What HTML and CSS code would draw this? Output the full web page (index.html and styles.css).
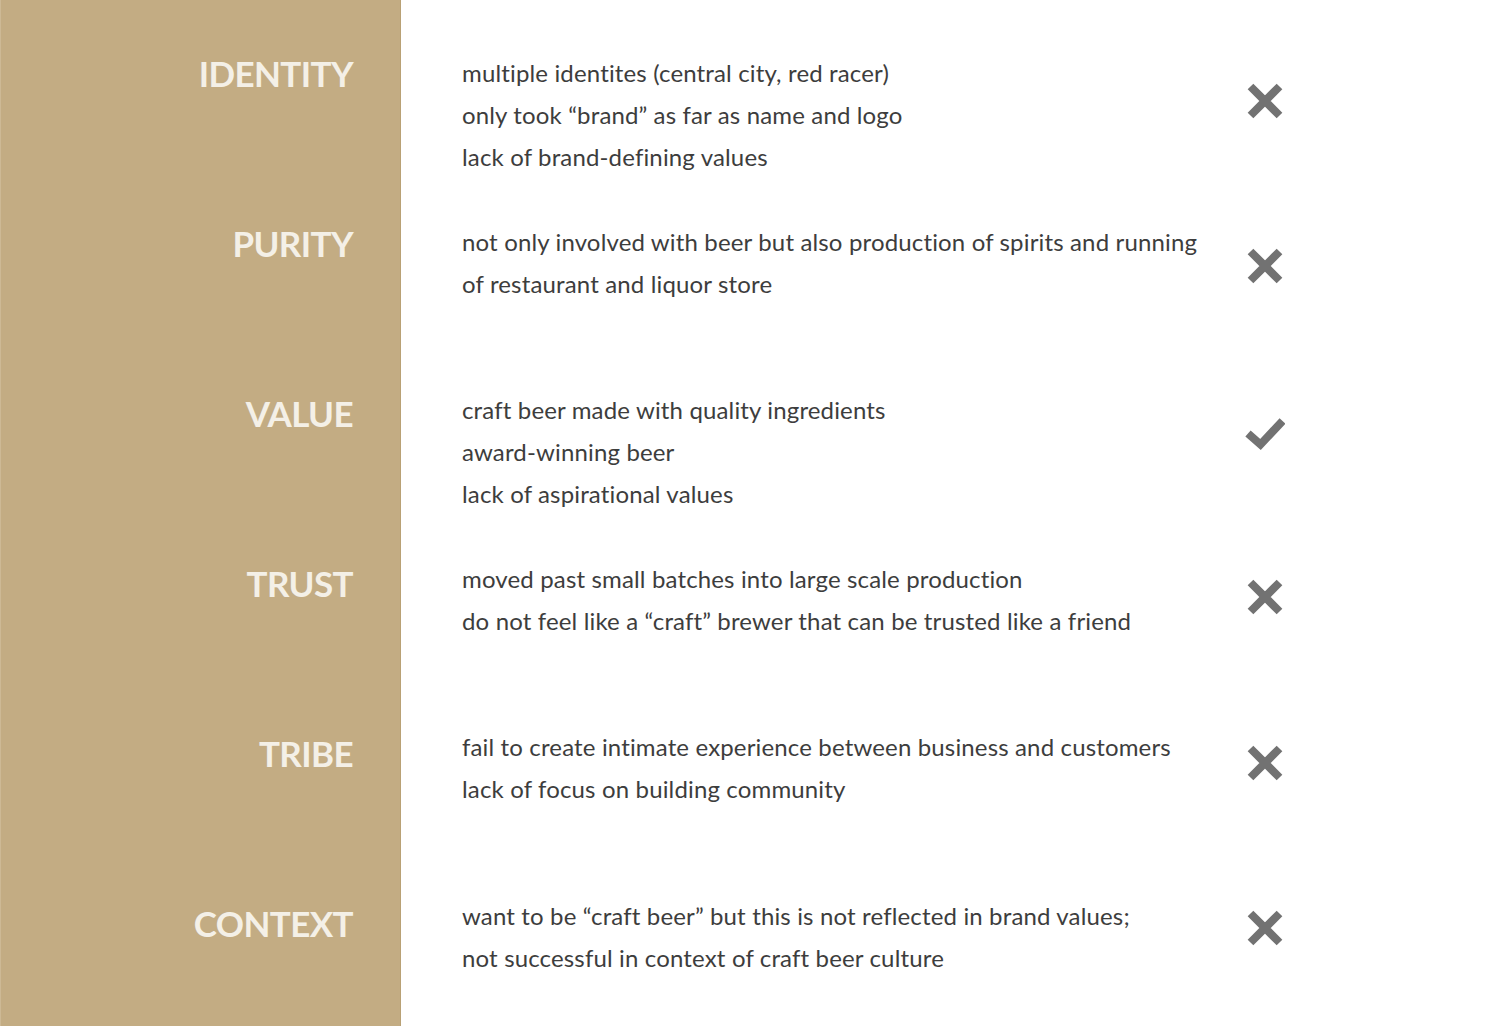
FILE: index.html
```html
<!DOCTYPE html>
<html>
<head>
<meta charset="utf-8">
<link rel="stylesheet" href="styles.css">
</head>
<body>
<div class="page">
  <aside class="sidebar">
    <div class="label">IDENTITY</div>
    <div class="label">PURITY</div>
    <div class="label">VALUE</div>
    <div class="label">TRUST</div>
    <div class="label">TRIBE</div>
    <div class="label">CONTEXT</div>
  </aside>
  <main class="main">
    <div class="notes">
      <div class="note">
        <p>multiple identites (central city, red racer)</p>
        <p>only took “brand” as far as name and logo</p>
        <p>lack of brand-defining values</p>
      </div>
      <div class="note">
        <p>not only involved with beer but also production of spirits and running</p>
        <p>of restaurant and liquor store</p>
      </div>
      <div class="note">
        <p>craft beer made with quality ingredients</p>
        <p>award-winning beer</p>
        <p>lack of aspirational values</p>
      </div>
      <div class="note">
        <p>moved past small batches into large scale production</p>
        <p>do not feel like a “craft” brewer that can be trusted like a friend</p>
      </div>
      <div class="note">
        <p>fail to create intimate experience between business and customers</p>
        <p>lack of focus on building community</p>
      </div>
      <div class="note">
        <p>want to be “craft beer” but this is not reflected in brand values;</p>
        <p>not successful in context of craft beer culture</p>
      </div>
    </div>
    <div class="marks">
      <div class="mark"><svg class="icon" viewBox="0 0 40 40"><path d="M5.5 5.5 L34.5 34.5 M34.5 5.5 L5.5 34.5" /></svg></div>
      <div class="mark"><svg class="icon" viewBox="0 0 40 40"><path d="M5.5 5.5 L34.5 34.5 M34.5 5.5 L5.5 34.5" /></svg></div>
      <div class="mark"><svg class="icon" viewBox="0 0 40 40"><path d="M3 21.5 L15.5 32.5 L37.5 9" /></svg></div>
      <div class="mark"><svg class="icon" viewBox="0 0 40 40"><path d="M5.5 5.5 L34.5 34.5 M34.5 5.5 L5.5 34.5" /></svg></div>
      <div class="mark"><svg class="icon" viewBox="0 0 40 40"><path d="M5.5 5.5 L34.5 34.5 M34.5 5.5 L5.5 34.5" /></svg></div>
      <div class="mark"><svg class="icon" viewBox="0 0 40 40"><path d="M5.5 5.5 L34.5 34.5 M34.5 5.5 L5.5 34.5" /></svg></div>
    </div>
  </main>
</div>
</body>
</html>
```
FILE: styles.css
```css
html, body {
  margin: 0;
  padding: 0;
  background: #ffffff;
}
.page {
  display: flex;
  width: 1500px;
  height: 1026px;
  overflow: hidden;
}
.sidebar {
  width: 352px;
  flex: none;
  background: #c3ac83;
  border-left: 1px solid #cdb995;
  border-right: 1px solid #b9a175;
  padding-top: 53px;
  padding-right: 47px;
  box-sizing: content-box;
  display: flex;
  flex-direction: column;
  align-items: flex-end;
  overflow: hidden;
}
.label {
  height: 170px;
  flex: none;
  font-family: "Lato", "Liberation Sans", sans-serif;
  font-weight: 700;
  font-size: 35px;
  line-height: 40px;
  color: #f4f0e7;
  letter-spacing: -0.6px;
}
.main {
  flex: 1;
  display: flex;
  padding-left: 61px;
}
.notes {
  width: 760px;
  padding-top: 52px;
  display: flex;
  flex-direction: column;
}
.note {
  height: 168.6px;
  flex: none;
}
.note p {
  margin: 0;
  font-family: "Lato", "Liberation Sans", sans-serif;
  font-size: 24px;
  line-height: 42px;
  letter-spacing: 0.15px;
  color: #3d3d3d;
  white-space: nowrap;
}
.marks {
  margin-left: 23px;
  padding-top: 81px;
  display: flex;
  flex-direction: column;
  width: 40px;
}
.mark {
  height: 165.4px;
  flex: none;
}
.icon {
  width: 40px;
  height: 40px;
  display: block;
}
.icon path {
  fill: none;
  stroke: #727272;
  stroke-width: 8;
  stroke-linecap: butt;
  stroke-linejoin: miter;
}
```
